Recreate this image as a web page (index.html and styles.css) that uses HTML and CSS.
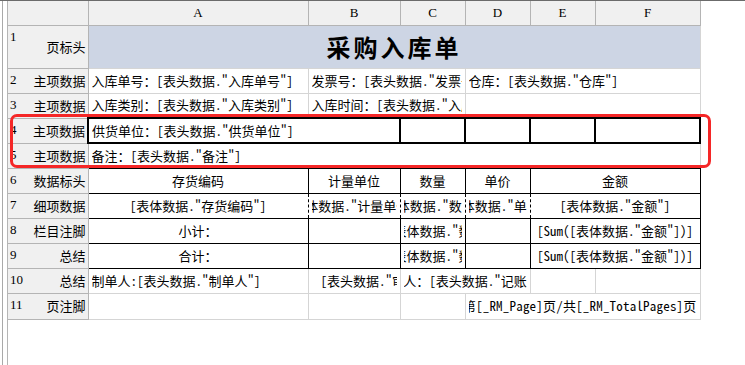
FILE: index.html
```html
<!DOCTYPE html>
<html lang="zh-CN">
<head>
    <meta charset="UTF-8">
    <title>采购入库单</title>
    <link rel="stylesheet" href="styles.css">
</head>
<body>
    <div class="frame">
        <div class="rail">
            <div class="sheet">
                <table class="grid">
                    <colgroup>
                        <col class="col-rh">
                        <col class="col-a">
                        <col class="col-b">
                        <col class="col-c">
                        <col class="col-d">
                        <col class="col-e">
                        <col class="col-f">
                    </colgroup>
                    <tr class="row-head">
                        <th class="corner"></th>
                        <th>A</th>
                        <th>B</th>
                        <th>C</th>
                        <th>D</th>
                        <th>E</th>
                        <th>F</th>
                    </tr>
                    <tr class="row-title">
                        <th class="rh"><div class="rh-in tall"><span class="rn">1</span><span class="rl">页标头</span></div></th>
                        <td colspan="6" class="title">采购入库单</td>
                    </tr>
                    <tr>
                        <th class="rh"><div class="rh-in"><span class="rn">2</span><span class="rl">主项数据</span></div></th>
                        <td><div class="txt">入库单号：[表头数据."入库单号"]</div></td>
                        <td colspan="2"><div class="txt">发票号：[表头数据."发票号"]</div></td>
                        <td colspan="3"><div class="txt">仓库：[表头数据."仓库"]</div></td>
                    </tr>
                    <tr>
                        <th class="rh"><div class="rh-in"><span class="rn">3</span><span class="rl">主项数据</span></div></th>
                        <td><div class="txt">入库类别：[表头数据."入库类别"]</div></td>
                        <td colspan="2"><div class="txt">入库时间：[表头数据."入库时间"]</div></td>
                        <td colspan="3"></td>
                    </tr>
                    <tr>
                        <th class="rh"><div class="rh-in"><span class="rn">4</span><span class="rl">主项数据</span></div></th>
                        <td colspan="2" class="bold-box"><div class="txt">供货单位：[表头数据."供货单位"]</div></td>
                        <td class="bold-box"></td>
                        <td class="bold-box"></td>
                        <td class="bold-box"></td>
                        <td class="bold-box"></td>
                    </tr>
                    <tr>
                        <th class="rh"><div class="rh-in"><span class="rn">5</span><span class="rl">主项数据</span></div></th>
                        <td colspan="6" class="last-head"><div class="txt">备注：[表头数据."备注"]</div></td>
                    </tr>
                    <tr>
                        <th class="rh"><div class="rh-in"><span class="rn">6</span><span class="rl">数据标头</span></div></th>
                        <td class="body"><div class="ctr">存货编码</div></td>
                        <td class="body"><div class="ctr">计量单位</div></td>
                        <td class="body"><div class="ctr">数量</div></td>
                        <td class="body"><div class="ctr">单价</div></td>
                        <td colspan="2" class="body"><div class="ctr">金额</div></td>
                    </tr>
                    <tr class="row-detail">
                        <th class="rh"><div class="rh-in"><span class="rn">7</span><span class="rl">细项数据</span></div></th>
                        <td class="body"><div class="ctr">[表体数据."存货编码"]</div></td>
                        <td class="body"><div class="ctr">[表体数据."计量单位"]</div></td>
                        <td class="body"><div class="ctr">[表体数据."数量"]</div></td>
                        <td class="body"><div class="ctr">[表体数据."单价"]</div></td>
                        <td colspan="2" class="body"><div class="ctr">[表体数据."金额"]</div></td>
                    </tr>
                    <tr>
                        <th class="rh"><div class="rh-in"><span class="rn">8</span><span class="rl">栏目注脚</span></div></th>
                        <td class="body"><div class="ctr">小计：</div></td>
                        <td class="body"></td>
                        <td class="body"><div class="ctr">[Sum([表体数据."数量"])]</div></td>
                        <td class="body"></td>
                        <td colspan="2" class="body"><div class="ctr">[Sum([表体数据."金额"])]</div></td>
                    </tr>
                    <tr>
                        <th class="rh"><div class="rh-in"><span class="rn">9</span><span class="rl">总结</span></div></th>
                        <td class="body"><div class="ctr">合计：</div></td>
                        <td class="body"></td>
                        <td class="body"><div class="ctr">[Sum([表体数据."数量"])]</div></td>
                        <td class="body"></td>
                        <td colspan="2" class="body"><div class="ctr">[Sum([表体数据."金额"])]</div></td>
                    </tr>
                    <tr>
                        <th class="rh"><div class="rh-in"><span class="rn">10</span><span class="rl">总结</span></div></th>
                        <td><div class="txt">制单人:[表头数据."制单人"]</div></td>
                        <td><div class="txt indent">[表头数据."审核人"]</div></td>
                        <td colspan="2"><div class="ctr">记账人：[表头数据."记账人"]</div></td>
                        <td></td>
                        <td></td>
                    </tr>
                    <tr class="row-foot">
                        <th class="rh"><div class="rh-in"><span class="rn">11</span><span class="rl">页注脚</span></div></th>
                        <td></td>
                        <td></td>
                        <td></td>
                        <td colspan="3"><div class="rgt">第[_RM_Page]页/共[_RM_TotalPages]页</div></td>
                    </tr>
                </table>
            </div>
        </div>
        <div class="mark"></div>
    </div>
</body>
</html>
```

FILE: styles.css
```css
body {
    margin: 0;
    background: #fff;
    color: #000;
    font-family: "Noto Sans Mono CJK SC", "Noto Sans CJK SC", sans-serif;
    font-size: 13px;
}

.frame {
    position: relative;
    height: 365px;
    box-sizing: border-box;
    border-top: 1px solid #6b6b6b;
    padding-left: 2px;
    overflow: hidden;
}

.rail {
    height: 100%;
    border-left: 1px solid #a9a9a9;
    padding-left: 4px;
}

.sheet {
    height: 100%;
    border-left: 1px solid #b5b5b5;
}

.grid {
    width: 692px;
    table-layout: fixed;
    border-collapse: collapse;
}

.col-rh { width: 80px; }
.col-a { width: 220px; }
.col-b { width: 92px; }
.col-c { width: 65px; }
.col-d { width: 65px; }
.col-e { width: 65px; }
.col-f { width: 105px; }

.grid tr {
    height: 25px;
}

.grid .row-head {
    height: 24px;
}

.grid .row-title {
    height: 43px;
}

.grid .row-foot {
    height: 26px;
}

.grid th,
.grid td {
    border: 1px solid #d5d5d5;
    padding: 0 3px;
    vertical-align: middle;
    white-space: nowrap;
    overflow: hidden;
    line-height: 16px;
}

.row-head th {
    background: #f0f0f0;
    border-color: #b4b4b4;
    border-top: none;
    font-family: "Liberation Serif", serif;
    font-weight: normal;
    font-size: 13px;
}

.row-head .corner {
    border-left: none;
}

.rh {
    background: #f0f0f0;
    border-color: #b4b4b4 !important;
    border-left: none !important;
    font-weight: normal;
}

.grid .rh {
    padding: 0 2px;
}

.rh-in {
    display: flex;
    justify-content: space-between;
    height: 24px;
}

.rh-in.tall {
    height: 42px;
}

.rn {
    align-self: flex-start;
    padding-top: 3px;
    font-family: "Liberation Serif", serif;
    font-size: 13px;
}

.rl {
    align-self: center;
}

.title {
    background: #cdd5e4;
    text-align: center;
    font-size: 24px;
    font-weight: bold;
    letter-spacing: 3px;
}

.txt {
    overflow: hidden;
    white-space: nowrap;
}

.txt.indent {
    padding-left: 9px;
}

.ctr {
    display: flex;
    justify-content: center;
    overflow: hidden;
    white-space: nowrap;
}

.rgt {
    display: flex;
    justify-content: flex-end;
    overflow: hidden;
    white-space: nowrap;
    letter-spacing: 0.2px;
}

.grid .bold-box {
    border: 2px solid #000;
}

.grid .last-head {
    border-bottom-color: #000;
}

.grid .body {
    border: 1px solid #000;
}

.row-detail .body {
    border-right: none;
    border-left: 1px dashed #000;
}

.row-detail .body:first-of-type {
    border-left: 1px solid #d5d5d5;
}

.row-detail .body:last-child {
    border-right: 1px solid #000;
}

.mark {
    position: absolute;
    left: 10px;
    top: 113px;
    width: 701px;
    height: 54px;
    box-sizing: border-box;
    border: 3px solid #f52727;
    border-radius: 7px;
    pointer-events: none;
}
```
